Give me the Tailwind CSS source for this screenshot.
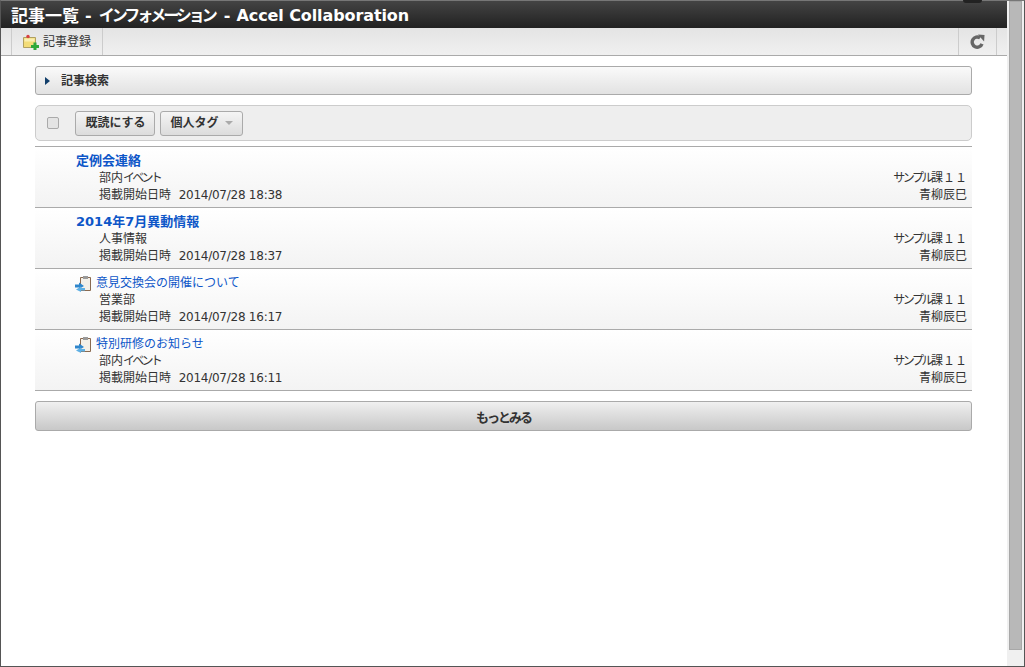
<!DOCTYPE html>
<html lang="ja">
<head>
<meta charset="utf-8">
<script src="https://cdn.jsdelivr.net/npm/@tailwindcss/browser@4"></script>
</head>
<body class="h-[667px] w-[1025px] overflow-hidden bg-white font-['DejaVu_Sans','Noto_Sans_CJK_JP',sans-serif] text-[12px] text-[#333]">
<div class="relative flex h-[667px] border-x border-b border-t border-x-[#555] border-b-[#555] border-t-[#777]">
  <main class="flex w-[1006px] flex-col">
    <header class="flex h-[27px] items-center bg-gradient-to-b from-[#444] to-[#222] pl-[10px] pt-[3px] text-[16px] font-bold leading-[24px] text-white">
      <span class="text-[17px]">記事一覧</span>
      <span class="ml-[6px]">-</span>
      <span class="ml-[7px] tracking-[-3px]">インフォメーション</span>
      <span class="ml-[9px]">-</span>
      <span class="ml-[6px] tracking-[-0.100px]">Accel Collaboration</span>
    </header>
    <nav class="flex h-[28px] items-stretch justify-between border-b border-[#aaa] bg-gradient-to-b from-[#e4e4e4] to-[#f0f0f0] pl-[10px] pr-[10px]">
      <div class="flex w-[92px] items-center gap-[4px] border-x border-[#ccc] pl-[11px] text-[#333]">
        <svg width="16" height="16" viewBox="0 0 16 16"><path d="M.5 3.5h12v10H.5z" fill="#f3dc78" stroke="#b0a060"/><path d="M1.500 4.500h10v3h-10z" fill="#f9eeb0"/><circle cx="5" cy="2.500" r="1.700" fill="#d84040"/><path d="M10.500 8.500h3v2.500H16v3h-2.500V16h-3v-2H8v-3h2.500z" fill="#2fa83a"/></svg>
        <span>記事登録</span>
      </div>
      <div class="flex w-[39px] items-center justify-center border-x border-[#ccc]">
        <svg width="15" height="15" viewBox="0 0 16 16"><path d="M12.800 10.500A5.400 5.400 0 1 1 10.800 4.200" fill="none" stroke="#666" stroke-width="3.600"/><path d="M8.500 .5l7 .5-.5 7z" fill="#666"/></svg>
      </div>
    </nav>
    <section class="flex flex-col pl-[34px] pr-[35px] pt-[10px]">
      <div class="flex h-[29px] items-center gap-[11px] rounded-[3px] border border-[#aaa] bg-gradient-to-b from-[#fafafa] to-[#e2e2e2] pl-[9px] font-bold">
        <svg width="5" height="8" viewBox="0 0 5 8"><path d="M0 0l5 4-5 4z" fill="#123f6b"/></svg>
        <span>記事検索</span>
      </div>
      <div class="mt-[10px] flex h-[36px] items-center rounded-[5px] border border-[#ccc] bg-[#eeeeee] pl-[11px]">
        <span class="h-[12px] w-[12px] rounded-[2px] border border-[#aaa] bg-[#e4e4e4]"></span>
        <button class="ml-[16px] h-[25px] w-[80px] rounded-[3px] border border-[#aaa] bg-gradient-to-b from-[#f5f5f5] to-[#dcdcdc] pl-[1px] font-bold">既読にする</button>
        <button class="ml-[5px] flex h-[25px] w-[83px] items-center justify-center gap-[6px] rounded-[3px] border border-[#aaa] bg-gradient-to-b from-[#f5f5f5] to-[#dcdcdc] font-bold">個人タグ<span class="h-0 w-0 border-x-[4px] border-t-[4px] border-x-transparent border-t-[#aaa]"></span></button>
      </div>
      <ul class="mt-[5px] border-t border-[#aaa]">
        <li class="flex h-[61px] justify-between border-b border-[#aaa] bg-gradient-to-b from-white to-[#f3f3f3] pt-[6px]">
          <div class="pl-[41px]">
            <a class="block h-[17px] text-[13px] font-bold leading-[16px] text-[#0d56c8]">定例会連絡</a>
            <p class="h-[17px] pl-[23px] leading-[17px]">部内<span class="tracking-[-2.750px]">イベント</span></p>
            <p class="h-[17px] pl-[23px] leading-[17px]">掲載開始日時&nbsp; <span class="tracking-[-0.250px]">2014/07/28 18:38</span></p>
          </div>
          <div class="pr-[5px] pt-[17px] text-right">
            <p class="h-[17px] leading-[17px]"><span class="tracking-[-2.500px]">サンプル</span>課１１</p>
            <p class="h-[17px] leading-[17px]">青柳辰巳</p>
          </div>
        </li>
        <li class="flex h-[61px] justify-between border-b border-[#aaa] bg-gradient-to-b from-white to-[#f3f3f3] pt-[6px]">
          <div class="pl-[41px]">
            <a class="block h-[17px] text-[13px] font-bold leading-[16px] text-[#0d56c8]">2014年7月異動情報</a>
            <p class="h-[17px] pl-[23px] leading-[17px]">人事情報</p>
            <p class="h-[17px] pl-[23px] leading-[17px]">掲載開始日時&nbsp; <span class="tracking-[-0.250px]">2014/07/28 18:37</span></p>
          </div>
          <div class="pr-[5px] pt-[17px] text-right">
            <p class="h-[17px] leading-[17px]"><span class="tracking-[-2.500px]">サンプル</span>課１１</p>
            <p class="h-[17px] leading-[17px]">青柳辰巳</p>
          </div>
        </li>
        <li class="flex h-[61px] justify-between border-b border-[#aaa] bg-gradient-to-b from-white to-[#f3f3f3] pt-[6px]">
          <div class="pl-[40px]">
            <a class="flex h-[17px] items-center gap-[4px] pb-[1px] text-[12px] leading-[16px] text-[#0d56c8]">
              <svg width="17" height="17" viewBox="0 0 17 17"><path d="M5.500 2.500h10v13h-10z" fill="#f4f0e8" stroke="#8a6a50"/><path d="M8 1h5v3H8z" fill="#9a9a9a"/><path d="M0 9.500h4V7.500l5 3.500-5 3v-1.500H0z" fill="#2f86cc"/><path d="M10 13H6v-1.500L1 14.500 6 17v-1.500h4z" fill="#5fb0e4"/></svg>
              意見交換会の開催について</a>
            <p class="h-[17px] pl-[24px] leading-[17px]">営業部</p>
            <p class="h-[17px] pl-[24px] leading-[17px]">掲載開始日時&nbsp; <span class="tracking-[-0.250px]">2014/07/28 16:17</span></p>
          </div>
          <div class="pr-[5px] pt-[17px] text-right">
            <p class="h-[17px] leading-[17px]"><span class="tracking-[-2.500px]">サンプル</span>課１１</p>
            <p class="h-[17px] leading-[17px]">青柳辰巳</p>
          </div>
        </li>
        <li class="flex h-[61px] justify-between border-b border-[#aaa] bg-gradient-to-b from-white to-[#f3f3f3] pt-[6px]">
          <div class="pl-[40px]">
            <a class="flex h-[17px] items-center gap-[4px] pb-[1px] text-[12px] leading-[16px] text-[#0d56c8]">
              <svg width="17" height="17" viewBox="0 0 17 17"><path d="M5.500 2.500h10v13h-10z" fill="#f4f0e8" stroke="#8a6a50"/><path d="M8 1h5v3H8z" fill="#9a9a9a"/><path d="M0 9.500h4V7.500l5 3.500-5 3v-1.500H0z" fill="#2f86cc"/><path d="M10 13H6v-1.500L1 14.500 6 17v-1.500h4z" fill="#5fb0e4"/></svg>
              特別研修のお知らせ</a>
            <p class="h-[17px] pl-[24px] leading-[17px]">部内<span class="tracking-[-2.750px]">イベント</span></p>
            <p class="h-[17px] pl-[24px] leading-[17px]">掲載開始日時&nbsp; <span class="tracking-[-0.250px]">2014/07/28 16:11</span></p>
          </div>
          <div class="pr-[5px] pt-[17px] text-right">
            <p class="h-[17px] leading-[17px]"><span class="tracking-[-2.500px]">サンプル</span>課１１</p>
            <p class="h-[17px] leading-[17px]">青柳辰巳</p>
          </div>
        </li>
      </ul>
      <button class="mt-[10px] h-[30px] rounded-[3px] border border-[#aaa] bg-gradient-to-b from-[#f0f0f0] to-[#c8c8c8] pt-[3px] text-[13px] font-bold tracking-[-2px]">もっとみる</button>
    </section>
  </main>
  <aside class="w-[17px] bg-[#f0f0f0] pl-[2px] pr-[2px]">
    <div class="h-[649px] w-[13px] border border-[#a8a8a8] bg-[#b8b8b8]"></div>
  </aside>
  <span class="absolute left-[962px] top-[-4px] h-[6px] w-[19px] rounded-full bg-[#222]"></span>
</div>
</body>
</html>
